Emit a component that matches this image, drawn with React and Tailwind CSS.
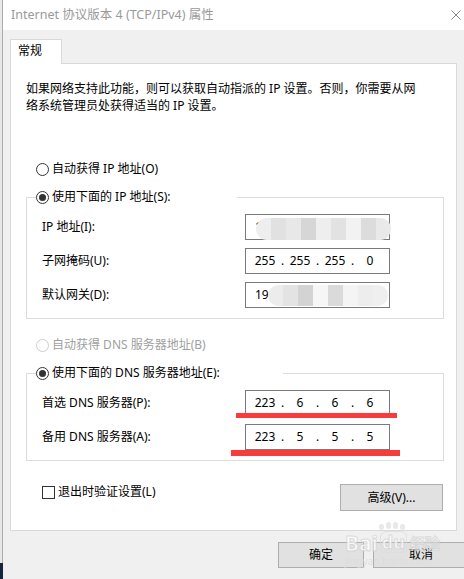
import React from 'react';

const FONT = "font-['Noto_Sans','Noto_Sans_CJK_SC',sans-serif]";

const IP_BLUR = ['#eeeeee', '#e1e1e1', '#e8e8e8', '#d6d6d6', '#eeeeee', '#e2e2e2', '#f2f2f2', '#dcdcdc', '#e9e9e9'];
const GW_BLUR = ['#ececec', '#e3e3e3', '#d3d3d3', '#f6f6f6', '#dadada', '#f4f4f4', '#ededed', '#efefef'];

function Radio({ checked, disabled }) {
  return (
    <div
      className={`w-[13px] h-[13px] rounded-full border bg-white flex items-center justify-center shrink-0 ${
        disabled ? 'border-[#cccccc]' : 'border-[#333333]'
      }`}
    >
      {checked && <div className="w-[7px] h-[7px] rounded-full bg-[#333333]" />}
    </div>
  );
}

function RadioRow({ label, checked, disabled }) {
  return (
    <div className={`flex items-center gap-[3px] h-[18px] leading-[18px] ${disabled ? 'text-[#a0a0a0]' : 'text-black'}`}>
      <Radio checked={checked} disabled={disabled} />
      <span>{label}</span>
    </div>
  );
}

// Windows style IP box: four segments split by dots
function IpBox({ parts, children }) {
  return (
    <div className="relative w-[145px] h-[26px] border border-[#7a7a7a] bg-white flex items-center pl-[5px] text-[12px] text-black">
      {parts.map((p, i) => (
        <React.Fragment key={i}>
          {i > 0 && <span className="w-[7px] text-center">.</span>}
          <span className="w-[28px] text-center">{p}</span>
        </React.Fragment>
      ))}
      {children}
    </div>
  );
}

function BlurBox({ lead, blocks, left, top, height }) {
  return (
    <div className="relative w-[145px] h-[26px] border border-[#7a7a7a] bg-white flex items-center pl-[9px] text-[12px] text-black">
      <span>{lead}</span>
      <div
        className="absolute flex rounded-full overflow-hidden"
        style={{ left, top, height }}
      >
        {blocks.map((c, i) => (
          <div key={i} className="w-[15px] h-full" style={{ background: c }} />
        ))}
      </div>
    </div>
  );
}

function FieldRow({ label, children }) {
  return (
    <div className="flex items-center">
      <div className="w-[218px] pl-[15px] leading-[18px]">{label}</div>
      {children}
    </div>
  );
}

function Button({ children, className = '' }) {
  return (
    <div className={`h-[26px] border border-[#adadad] bg-[#e1e1e1] flex items-center justify-center text-black leading-[18px] ${className}`}>
      {children}
    </div>
  );
}

export default function App() {
  return (
    <div className={`w-[464px] h-[579px] flex overflow-hidden bg-[#f0f0f0] text-[12px] ${FONT}`}>
      {/* left edge of the screen behind */}
      <div className="w-[3px] flex flex-col shrink-0">
        <div className="flex-1 flex">
          <div className="w-[2px] bg-[#e8e8e8]" />
          <div className="w-px bg-[#acacac]" />
        </div>
        <div className="h-[16px] bg-[#15243f]" />
      </div>

      <div className="flex-1 flex flex-col relative">
        {/* Title bar */}
        <div className="h-[30px] bg-white flex items-center justify-between pl-[8px] pr-[8px] shrink-0">
          <span className="text-[12.5px] text-[#9a9a9a]">Internet 协议版本 4 (TCP/IPv4) 属性</span>
          <svg width="10" height="10" viewBox="0 0 10 10" className="text-[#8a8a8a]">
            <path d="M0.5 0.5 L9.5 9.5 M9.5 0.5 L0.5 9.5" stroke="currentColor" strokeWidth="1" fill="none" />
          </svg>
        </div>

        {/* Body */}
        <div className="pt-[9px] pl-[7px] flex flex-col">
          {/* Tab */}
          <div className="w-[52px] h-[25px] border border-b-0 border-[#d9d9d9] bg-white relative z-10 -mb-px pl-[7px] pt-[2px] leading-[17px] text-black">
            常规
          </div>

          {/* Panel */}
          <div className="w-[447px] h-[468px] border border-[#d9d9d9] bg-white flex flex-col text-black">
            <p className="pl-[15px] pt-[16px] leading-[17px]">
              如果网络支持此功能，则可以获取自动指派的 IP 设置。否则，你需要从网
              <br />
              络系统管理员处获得适当的 IP 设置。
            </p>

            <div className="ml-[25px] mt-[46px]">
              <RadioRow label="自动获得 IP 地址(O)" />
            </div>

            <fieldset className="ml-[15px] mt-[10px] w-[418px] border border-[#dcdcdc] pb-[10px]">
              <legend className="ml-[9px] w-[201px]">
                <RadioRow label="使用下面的 IP 地址(S):" checked />
              </legend>
              <div className="pt-[8px] flex flex-col gap-[8px]">
                <FieldRow label="IP 地址(I):">
                  <BlurBox lead="1" blocks={IP_BLUR} left={10} top={3} height={22} />
                </FieldRow>
                <FieldRow label="子网掩码(U):">
                  <IpBox parts={['255', '255', '255', '0']} />
                </FieldRow>
                <FieldRow label="默认网关(D):">
                  <BlurBox lead="19" blocks={GW_BLUR} left={22} top={2} height={21} />
                </FieldRow>
              </div>
            </fieldset>

            <div className="ml-[25px] mt-[17px]">
              <RadioRow label="自动获得 DNS 服务器地址(B)" disabled />
            </div>

            <fieldset className="ml-[15px] mt-[10px] w-[418px] border border-[#dcdcdc] pb-[10px]">
              <legend className="ml-[9px] w-[247px]">
                <RadioRow label="使用下面的 DNS 服务器地址(E):" checked />
              </legend>
              <div className="pt-[8px] flex flex-col gap-[8px]">
                <FieldRow label="首选 DNS 服务器(P):">
                  <IpBox parts={['223', '6', '6', '6']}>
                    <div className="absolute left-[-10px] top-[22px] w-[161px] h-[5px] bg-[#f83b3b]" />
                  </IpBox>
                </FieldRow>
                <FieldRow label="备用 DNS 服务器(A):">
                  <IpBox parts={['223', '5', '5', '5']}>
                    <div className="absolute left-[-15px] top-[25px] w-[169px] h-[6px] bg-[#f83b3b]" />
                  </IpBox>
                </FieldRow>
              </div>
            </fieldset>

            <div className="mt-[22px] flex items-start justify-between pl-[31px] pr-[13px]">
              <div className="flex items-center gap-[3px] h-[18px] leading-[18px]">
                <div className="w-[13px] h-[13px] border border-[#333333] bg-white" />
                <span>退出时验证设置(L)</span>
              </div>
              <Button className="mt-[1px] w-[103px] h-[27px]">高级(V)...</Button>
            </div>
          </div>

          {/* Dialog buttons */}
          <div className="mt-[11px] pl-[268px] flex gap-[9px]">
            <Button className="w-[86px] shrink-0">确定</Button>
            <Button className="w-[96px] shrink-0">取消</Button>
          </div>
        </div>

        {/* Baidu watermark */}
        <div className="absolute left-[342px] top-[522px] flex flex-col items-start pointer-events-none opacity-75">
          <div className="flex gap-[2px] ml-[34px]">
            <div className="w-[5px] h-[6px] rounded-full bg-[#e2e2e2] mt-[2px]" />
            <div className="w-[5px] h-[7px] rounded-full bg-[#e2e2e2]" />
            <div className="w-[5px] h-[7px] rounded-full bg-[#e2e2e2]" />
            <div className="w-[5px] h-[6px] rounded-full bg-[#e2e2e2] mt-[2px]" />
          </div>
          <div className="flex items-end leading-[20px] mt-[1px]">
            <span className="text-[21px] font-bold text-white [-webkit-text-stroke:1px_#d4d4d4]">Bai</span>
            <span className="text-[18px] font-bold text-white [-webkit-text-stroke:1px_#d4d4d4] ml-[2px] rounded-[6px] border border-[#dcdcdc] px-[1px]">du</span>
            <span className="text-[15px] font-bold text-white [-webkit-text-stroke:1px_#d4d4d4] ml-[3px]">经验</span>
          </div>
          <span className="text-[10px] leading-[12px] text-[#dcdcdc] mt-[2px]">jingyan.baidu.com</span>
        </div>
      </div>
    </div>
  );
}
